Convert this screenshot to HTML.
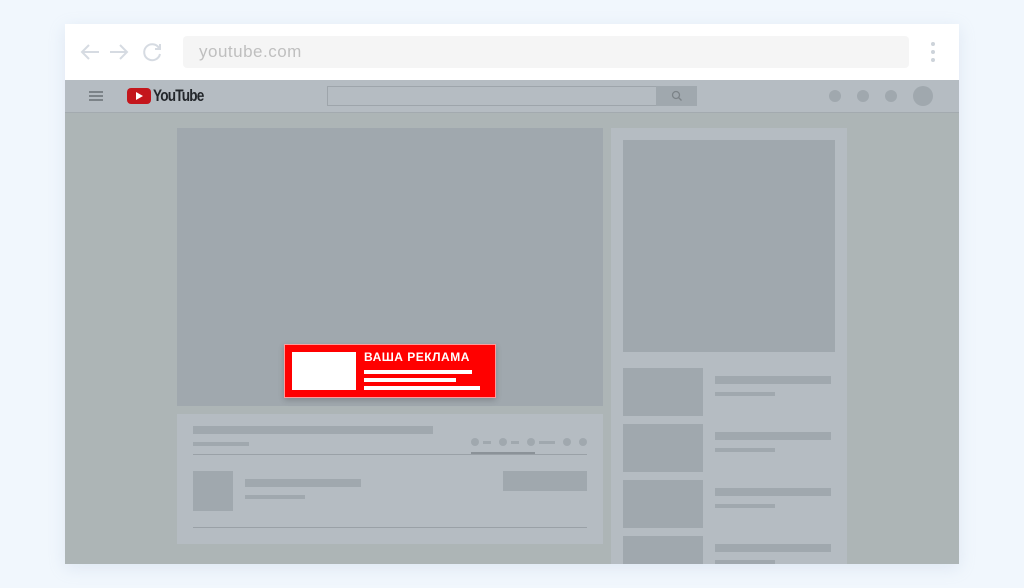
<!DOCTYPE html><html><head><style>
*{margin:0;padding:0;box-sizing:border-box}
body{width:1024px;height:588px;background:#f1f7fd;position:relative;overflow:hidden;font-family:"Liberation Sans",sans-serif}
div{position:absolute}
.g{background:#a0a8ae}
.p{background:#b5bcc2}
.d{border-radius:50%;background:#a0a8ae}
</style></head><body>
<div style="left:65px;top:24px;width:894px;height:540px;background:#adb5b6;box-shadow:0 4px 16px rgba(150,170,200,.2)">
</div>
<div style="left:65px;top:24px;width:894px;height:56px;background:#fff"></div>
<svg style="position:absolute;left:78px;top:40px" width="90" height="24" viewBox="0 0 90 24" fill="none" stroke="#d6dbe2" stroke-width="2">
<path d="M21 12H4M11 5L4 12L11 19"/><path d="M32 12H49M42 5L49 12L42 19"/>
<path d="M81 8A8 8 0 1 0 82 14"/><path d="M82 4V9H77" fill="none"/></svg>
<div style="left:183px;top:36px;width:726px;height:32px;background:#f5f5f5;border-radius:4px"></div>
<div style="left:199px;top:42px;font-size:17px;color:#bfbfbf;letter-spacing:.5px">youtube.com</div>
<div class="d" style="left:931px;top:42px;width:4px;height:4px;background:#cdd3da"></div>
<div class="d" style="left:931px;top:50px;width:4px;height:4px;background:#cdd3da"></div>
<div class="d" style="left:931px;top:58px;width:4px;height:4px;background:#cdd3da"></div>
<div class="p" style="left:65px;top:80px;width:894px;height:33px;border-bottom:1px solid #a3aaaf"></div>
<div style="left:89px;top:91px;width:14px;height:2px;background:#7c8388;box-shadow:0 4px 0 #7c8388,0 8px 0 #7c8388"></div>
<div style="left:127px;top:88px;width:24px;height:16px;background:#c4161c;border-radius:4px"></div>
<div style="left:136px;top:92px;width:0;height:0;border-left:7px solid #fff;border-top:4px solid transparent;border-bottom:4px solid transparent"></div>
<div style="left:153px;top:86px;font-size:17px;font-weight:bold;color:#23272b;letter-spacing:-1px;transform:scaleX(.8);transform-origin:left">YouTube</div>
<div style="left:327px;top:86px;width:330px;height:20px;border:1px solid #9ea5ab;background:#b5bcc2"></div>
<div class="g" style="left:656px;top:86px;width:41px;height:20px"></div>
<svg style="position:absolute;left:671px;top:90px" width="12" height="12" fill="none" stroke="#7c8388" stroke-width="1.3"><circle cx="5" cy="5" r="3.5"/><path d="M7.5 7.5L10.5 10.5"/></svg>
<div class="d" style="left:829px;top:90px;width:12px;height:12px"></div>
<div class="d" style="left:857px;top:90px;width:12px;height:12px"></div>
<div class="d" style="left:885px;top:90px;width:12px;height:12px"></div>
<div class="d" style="left:913px;top:86px;width:20px;height:20px"></div>
<div class="g" style="left:177px;top:128px;width:426px;height:278px"></div>
<div class="p" style="left:177px;top:414px;width:426px;height:130px"></div>
<div class="g" style="left:193px;top:426px;width:240px;height:8px"></div>
<div class="g" style="left:193px;top:442px;width:56px;height:4px"></div>
<div style="left:193px;top:454px;width:394px;height:1px;background:#9aa1a7"></div>
<div style="left:471px;top:452px;width:64px;height:2px;background:#8b9298"></div>
<div class="d" style="left:471px;top:438px;width:8px;height:8px"></div>
<div class="g" style="left:483px;top:441px;width:8px;height:3px"></div>
<div class="d" style="left:499px;top:438px;width:8px;height:8px"></div>
<div class="g" style="left:511px;top:441px;width:8px;height:3px"></div>
<div class="d" style="left:527px;top:438px;width:8px;height:8px"></div>
<div class="g" style="left:539px;top:441px;width:16px;height:3px"></div>
<div class="d" style="left:563px;top:438px;width:8px;height:8px"></div>
<div class="d" style="left:579px;top:438px;width:8px;height:8px"></div>
<div class="g" style="left:193px;top:471px;width:40px;height:40px"></div>
<div class="g" style="left:245px;top:479px;width:116px;height:8px"></div>
<div class="g" style="left:245px;top:495px;width:60px;height:4px"></div>
<div class="g" style="left:503px;top:471px;width:84px;height:20px"></div>
<div style="left:193px;top:527px;width:394px;height:1px;background:#9aa1a7"></div>
<div class="p" style="left:611px;top:128px;width:236px;height:436px"></div>
<div class="g" style="left:623px;top:140px;width:212px;height:212px"></div>
<div class="g" style="left:623px;top:368px;width:80px;height:48px"></div>
<div class="g" style="left:715px;top:376px;width:116px;height:8px"></div>
<div class="g" style="left:715px;top:392px;width:60px;height:4px"></div>
<div class="g" style="left:623px;top:424px;width:80px;height:48px"></div>
<div class="g" style="left:715px;top:432px;width:116px;height:8px"></div>
<div class="g" style="left:715px;top:448px;width:60px;height:4px"></div>
<div class="g" style="left:623px;top:480px;width:80px;height:48px"></div>
<div class="g" style="left:715px;top:488px;width:116px;height:8px"></div>
<div class="g" style="left:715px;top:504px;width:60px;height:4px"></div>
<div class="g" style="left:623px;top:536px;width:80px;height:28px"></div>
<div class="g" style="left:715px;top:544px;width:116px;height:8px"></div>
<div class="g" style="left:715px;top:560px;width:60px;height:4px"></div>
<div style="left:284px;top:344px;width:212px;height:54px;background:#ff0000;border:1px solid #ff9a9a;box-shadow:0 2px 6px rgba(0,0,0,.2)"></div>
<div style="left:292px;top:352px;width:64px;height:38px;background:#fff"></div>
<div style="left:364px;top:350px;font-size:12px;font-weight:bold;color:#fff;letter-spacing:.5px">ВАША РЕКЛАМА</div>
<div style="left:364px;top:370px;width:108px;height:4px;background:#fff"></div>
<div style="left:364px;top:378px;width:92px;height:4px;background:#fff"></div>
<div style="left:364px;top:386px;width:116px;height:4px;background:#fff"></div>
</body></html>
